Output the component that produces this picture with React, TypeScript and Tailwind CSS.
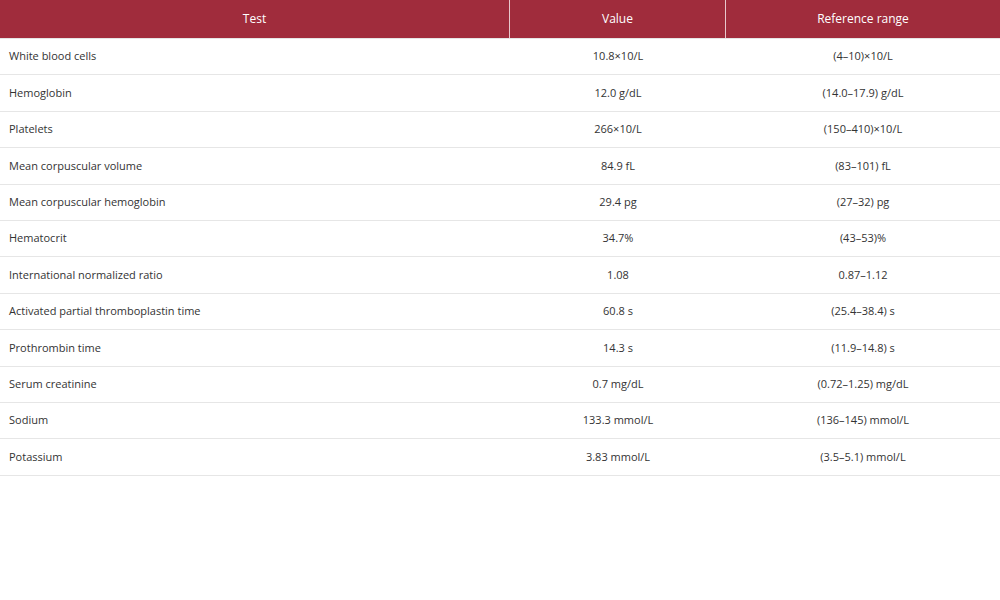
const rows: [string, string, string][] = [
  ["White blood cells", "10.8×10/L", "(4–10)×10/L"],
  ["Hemoglobin", "12.0 g/dL", "(14.0–17.9) g/dL"],
  ["Platelets", "266×10/L", "(150–410)×10/L"],
  ["Mean corpuscular volume", "84.9 fL", "(83–101) fL"],
  ["Mean corpuscular hemoglobin", "29.4 pg", "(27–32) pg"],
  ["Hematocrit", "34.7%", "(43–53)%"],
  ["International normalized ratio", "1.08", "0.87–1.12"],
  ["Activated partial thromboplastin time", "60.8 s", "(25.4–38.4) s"],
  ["Prothrombin time", "14.3 s", "(11.9–14.8) s"],
  ["Serum creatinine", "0.7 mg/dL", "(0.72–1.25) mg/dL"],
  ["Sodium", "133.3 mmol/L", "(136–145) mmol/L"],
  ["Potassium", "3.83 mmol/L", "(3.5–5.1) mmol/L"],
];

export default function App() {
  return (
    <div className="w-[1000px] h-[600px] bg-white text-[11px] text-[#333]" style={{ fontFamily: '"Open Sans", sans-serif' }}>
      <div className="grid grid-cols-[510px_216px_274px] h-[39px] bg-[#a02c3c] text-white text-[12px] border-b border-[#e5e5e5]">
        <div className="flex items-center justify-center border-r border-[#e8c8cc]">Test</div>
        <div className="flex items-center justify-center border-r border-[#e8c8cc]">Value</div>
        <div className="flex items-center justify-center">Reference range</div>
      </div>
      {rows.map(([t, v, r]) => (
        <div key={t} className="grid grid-cols-[510px_216px_274px] h-[36.4px] border-b border-[#e6e6e6]">
          <div className="flex items-center pl-[9px]">{t}</div>
          <div className="flex items-center justify-center">{v}</div>
          <div className="flex items-center justify-center">{r}</div>
        </div>
      ))}
    </div>
  );
}
